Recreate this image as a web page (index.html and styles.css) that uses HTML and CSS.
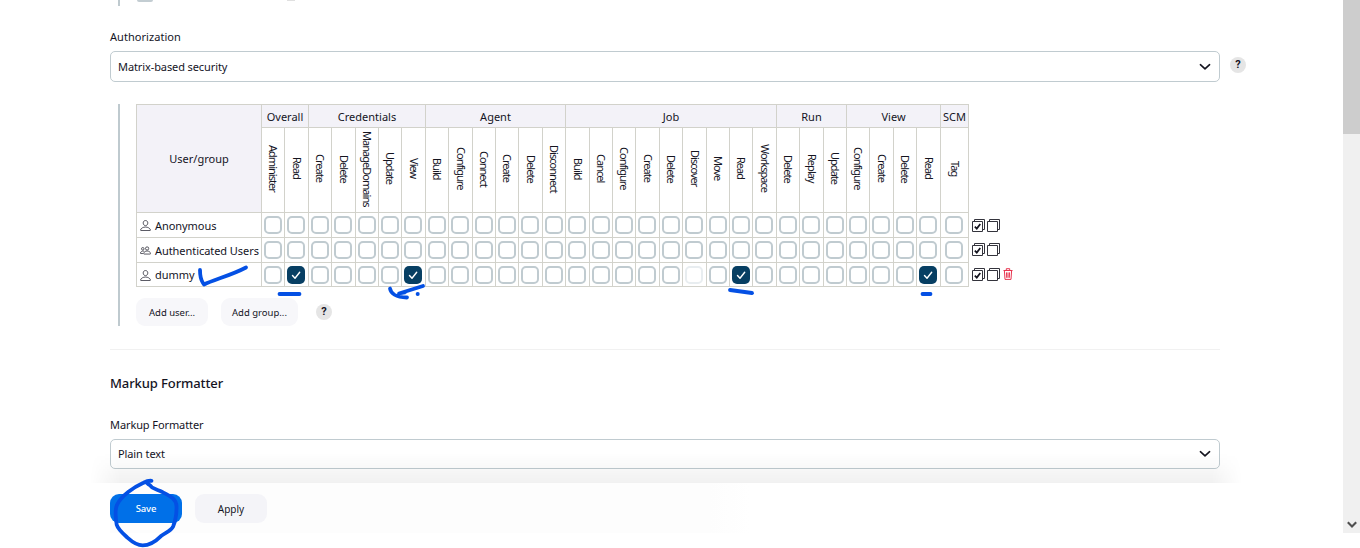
FILE: index.html
```html
<!DOCTYPE html>
<html lang="en">
<head>
<meta charset="utf-8">
<title>Configure Global Security</title>
<link rel="stylesheet" href="styles.css">
</head>
<body>
<svg class="defs" aria-hidden="true">
  <symbol id="chevron" viewBox="0 0 12 8"><path d="M1.4 1.7 6 5.9l4.6-4.2" fill="none" stroke="#14141f" stroke-width="1.6" stroke-linecap="round" stroke-linejoin="round"/></symbol>
  <symbol id="person" viewBox="0 0 12 12"><g fill="none" stroke="#33333f" stroke-width=".9" stroke-linejoin="round"><path d="M6 .6c1.6 0 2.6 1.2 2.5 2.8C8.400 5 7.300 6.200 6 6.200S3.600 5 3.500 3.400C3.400 1.800 4.400.6 6 .6z"/><path d="M6 7.700c-2.500 0-4.900 1.200-5.400 3.100-.1.400.1.700.5.700h9.800c.4 0 .6-.3.500-.7C10.900 8.900 8.500 7.700 6 7.700z"/></g></symbol>
  <symbol id="people" viewBox="0 0 13 10"><g fill="none" stroke="#33333f" stroke-width=".95" stroke-linejoin="round"><circle cx="8.400" cy="2.600" r="1.900"/><path d="M8.400 5.600c-2 0-3.700 1-4.100 2.800-.1.500.1.800.5.800h7.200c.4 0 .6-.3.500-.8C12.100 6.600 10.400 5.600 8.400 5.600z"/><circle cx="3.300" cy="3" r="1.500"/><path d="M4.700 5.800C2.700 5.200.8 6.400.5 7.900c-.1.400.1.700.5.700h2.500"/></g></symbol>
  <symbol id="all" viewBox="0 0 13 13"><path d="M.5 2.500h10v10H.5zM2.500 2.500v-2h10v10h-2" fill="none" stroke="#33333c"/><path d="M2.800 7.600 4.800 9.600 8.300 5.100" fill="none" stroke="#14141f" stroke-width="1.700"/></symbol>
  <symbol id="none" viewBox="0 0 13 13"><path d="M.5 2.500h10v10H.5zM2.500 2.500v-2h10v10h-2" fill="none" stroke="#33333c"/></symbol>
  <symbol id="trash" viewBox="0 0 10 12"><path d="M.5 2.500h9M3.300 2.300V.7h3.400v1.600M1.400 2.700l.6 8.700h6l.6-8.700M3.500 4.400l.2 5.400M5 4.400v5.400M6.500 4.400l-.2 5.400" fill="none" stroke="#e8354f" stroke-width="1"/></symbol>
</svg>
<div class="window">
  <main class="content">
    <div class="previous"><i class="previous-box"></i><i class="previous-help"></i></div>
    <label class="label label-auth">Authorization</label>
    <div class="select-row">
      <div class="select select-auth"><span>Matrix-based security</span><svg class="chevron"><use href="#chevron"/></svg></div>
      <span class="help">?</span>
    </div>
    <section class="nested">
      <div class="matrix-row">
        <div class="matrix" id="matrix"><div class="head corner">User/group</div></div>
        <div class="actions">
          <div class="action"><svg><use href="#all"/></svg><svg><use href="#none"/></svg></div>
          <div class="action"><svg><use href="#all"/></svg><svg><use href="#none"/></svg></div>
          <div class="action"><svg><use href="#all"/></svg><svg><use href="#none"/></svg><svg class="trash"><use href="#trash"/></svg></div>
        </div>
      </div>
      <div class="add-row">
        <button class="button add-user">Add user...</button>
        <button class="button add-group">Add group...</button>
        <span class="help">?</span>
      </div>
    </section>
    <hr class="divider">
    <h2 class="heading">Markup Formatter</h2>
    <label class="label label-markup">Markup Formatter</label>
    <div class="select select-markup"><span>Plain text</span><svg class="chevron"><use href="#chevron"/></svg></div>
    <footer class="footer">
      <button class="button save">Save</button>
      <button class="button apply">Apply</button>
    </footer>
  </main>
  <div class="scrollbar"><div class="thumb"></div><svg class="scroll-down" viewBox="0 0 10 8"><path d="M.8 1.300 5 5.500l4.200-4.200" fill="none" stroke="#505050" stroke-width="2.100"/></svg></div>
</div>
<svg class="ink" viewBox="0 0 1360 548" aria-hidden="true">
  <path d="M200 270c0 6 1 10 3 13l1 1.500c10-5 27-9 42-17"/>
  <path d="M279.500 294H299.500"/>
  <path d="M390 288.500c1 6 6 8.500 17 9M399 293.500l24-7.500M399 293.500l6-1"/>
  <path d="M417.600 294h.2"/>
  <path d="M730 290l22 3"/>
  <path d="M922.500 294h8"/>
  <path d="M151.500 480.800c-2.500-.2-5 .4-8 2-10 4.500-22 13-26.500 22-2 5-1.500 13-.3 20 1.500 5 6 8.500 11 13 5 4.500 9 7.500 15 7.500 8 0 13-4 18-9 5-4 10-5 12.500-10 2-5 3.500-13 3.300-20-.2-8-8-11-13.500-14-4-2.500-10-3-12-6-1-1-2-1.500-3.500-3"/>
</svg>
<script src="matrix.js"></script>
</body>
</html>
```
FILE: styles.css
```css
* { box-sizing: border-box; }
body {
  margin: 0;
  height: 548px;
  overflow: hidden;
  background: #fff;
  color: #14141f;
  font: 11px/16px "Noto Sans", "Open Sans", sans-serif;
}
.defs { position: absolute; width: 0; height: 0; }
.window { display: flex; height: 533px; }
.content {
  display: flex;
  flex-direction: column;
  width: 1343px;
  height: 533px;
  padding-left: 110px;
  position: relative;
}
.previous {
  display: flex;
  margin-left: 8px;
  height: 6px;
  border-left: 2px solid #bfcacf;
}
.previous-box { width: 16px; height: 2px; margin-left: 17px; border-radius: 0 0 5px 5px; background: #c3cdd2; }
.previous-help { width: 8px; height: 1px; margin-left: 134px; background: #e0e0e0; }

.label { display: block; height: 16px; }
.label-auth { margin-top: 23px; letter-spacing: .05px; }
.select-row { display: flex; gap: 10px; margin-top: 6px; }
.select {
  display: flex;
  justify-content: space-between;
  align-items: center;
  width: 1110px;
  padding: 0 8px 0 7px;
  border: 1px solid #c0cbd0;
  border-radius: 5px;
  background: #fff;
  letter-spacing: -.1px;
}
.select-auth { height: 31px; }
.select-markup { height: 30px; margin-top: 6px; flex: none; }
.chevron { width: 12px; height: 8px; }
.help {
  width: 16px;
  height: 16px;
  margin-top: 6px;
  border-radius: 50%;
  background: #e5e5e5;
  font: 700 11px/16px Roboto, sans-serif;
  text-align: center;
}

.nested {
  margin: 22px 0 0 8px;
  padding-left: 16px;
  height: 222px;
  border-left: 2px solid #bfcacf;
}
.matrix-row { display: flex; }
.matrix {
  display: grid;
  grid-template-rows: 22px 84px 24px 24px 23px;
  gap: 1px;
  padding: 1px;
  background: #d2d2cb;
}
.matrix > div { display: flex; align-items: center; justify-content: center; background: #fff; min-width: 0; white-space: nowrap; }
.matrix .head { background: #f3f2f8; padding-top: 2px; }
.matrix .corner { grid-row: span 2; padding-top: 0; }
.matrix .vertical { padding-bottom: 3px; }
.matrix .vertical span { writing-mode: vertical-rl; letter-spacing: -.97px; }
.matrix .user { justify-content: flex-start; padding: 1px 0 0 3px; gap: 4px; letter-spacing: -.06px; }
.user svg { width: 11px; height: 11px; flex: none; }
.check {
  display: flex;
  width: 18px;
  height: 18px;
  margin-right: 1px;
  border: 2px solid #c0cbd0;
  border-radius: 5px;
  flex: none;
}
.check.faded { border-color: #e8edf0; }
.check.on { border: 0; background: #073f63; }
.check svg { width: 18px; height: 18px; }
.actions { display: flex; flex-direction: column; margin: 109px 0 0 3px; }
.action { display: flex; align-items: center; gap: 2px; height: 24.500px; }
.action svg { width: 13px; height: 13px; }
.action .trash { width: 10px; height: 12px; margin-left: 1px; }
.add-row { display: flex; margin-top: 11px; }
.button {
  height: 28px;
  padding: 1px 0 0;
  border: 0;
  border-radius: 9px;
  background: #f7f7fa;
  color: #14141f;
  font: 9.500px/16px "Noto Sans", "Open Sans", sans-serif;
}
.add-user { width: 72px; }
.add-group { width: 77px; margin-left: 13px; }
.add-row .help { margin-left: 18px; }

.divider { width: 1110px; height: 1px; margin: 23px 0 0; border: 0; background: #f1f1f1; flex: none; }
.heading { margin: 23px 0 0; font-size: 13px; line-height: 20px; font-weight: 500; letter-spacing: -.1px; }
.label-markup { margin-top: 24px; letter-spacing: -.1px; }
.footer {
  display: flex;
  gap: 13px;
  height: 50px;
  margin-top: 14px;
  padding-top: 11px;
  position: relative;
  background: linear-gradient(90deg, #fdfdfd, #fdfdfd 600px, #fff 640px);
}
.footer::before {
  content: "";
  position: absolute;
  left: -20px;
  top: -30px;
  width: 1152px;
  height: 30px;
  background: linear-gradient(rgba(0,0,0,0), rgba(0,0,0,.055));
  -webkit-mask-image: linear-gradient(90deg, transparent, #000 30px, #000 1122px, transparent);
  mask-image: linear-gradient(90deg, transparent, #000 30px, #000 1122px, transparent);
}
.footer .button { width: 72px; height: 29px; }
.footer .save { background: #0070e8; color: #fff; font-weight: 500; letter-spacing: -.15px; }
.footer .apply { background: #f4f4f8; font-size: 10px; }

.scrollbar { display: flex; flex-direction: column; justify-content: space-between; align-items: center; width: 17px; height: 533px; padding-bottom: 4px; background: #f0f0f0; }
.thumb { width: 17px; height: 134px; background: #cdcdcd; }
.scroll-down { width: 10px; height: 8px; }
.ink { position: absolute; left: 0; top: 0; width: 1360px; height: 548px; pointer-events: none; fill: none; stroke: #0450e4; stroke-width: 3.800; stroke-linecap: round; stroke-linejoin: round; }
```
FILE: matrix.js
```javascript
const groups = [
  ["Overall", ["Administer", "Read"]],
  ["Credentials", ["Create", "Delete", "ManageDomains", "Update", "View"]],
  ["Agent", ["Build", "Configure", "Connect", "Create", "Delete", "Disconnect"]],
  ["Job", ["Build", "Cancel", "Configure", "Create", "Delete", "Discover", "Move", "Read", "Workspace"]],
  ["Run", ["Delete", "Replay", "Update"]],
  ["View", ["Configure", "Create", "Delete", "Read"]],
  ["SCM", ["Tag"]]
];
const users = [
  ["person", "Anonymous", [], []],
  ["people", "Authenticated Users", [], []],
  ["person", "dummy", [1, 6, 20, 28], [18]]
];
const widths = [124, 22, 23, 22, 23, 22, 22, 23, 22, 23, 22, 22, 23, 22, 23, 22, 22, 23, 22, 23, 22, 22, 23, 22, 23, 22, 22, 23, 22, 23, 27];

const matrix = document.getElementById("matrix");
matrix.style.gridTemplateColumns = widths.map(w => w + "px").join(" ");

let html = "";
for (const [name, permissions] of groups) {
  html += `<div class="head" style="grid-column: span ${permissions.length}">${name}</div>`;
}
for (const [, permissions] of groups) {
  for (const p of permissions) html += `<div class="vertical"><span>${p}</span></div>`;
}
const tick = '<svg viewBox="0 0 18 18"><path d="M5.500 9.500l2.500 2.700 4.700-6" fill="none" stroke="#fff" stroke-width="1.400" stroke-linecap="round" stroke-linejoin="round"/></svg>';
for (const [icon, name, on, faded] of users) {
  html += `<div class="user"><svg><use href="#${icon}"/></svg><span>${name}</span></div>`;
  for (let i = 0; i < widths.length - 1; i++) {
    const state = on.includes(i) ? " on" : faded.includes(i) ? " faded" : "";
    html += `<div><span class="check${state}">${state === " on" ? tick : ""}</span></div>`;
  }
}
matrix.insertAdjacentHTML("beforeend", html);
```
